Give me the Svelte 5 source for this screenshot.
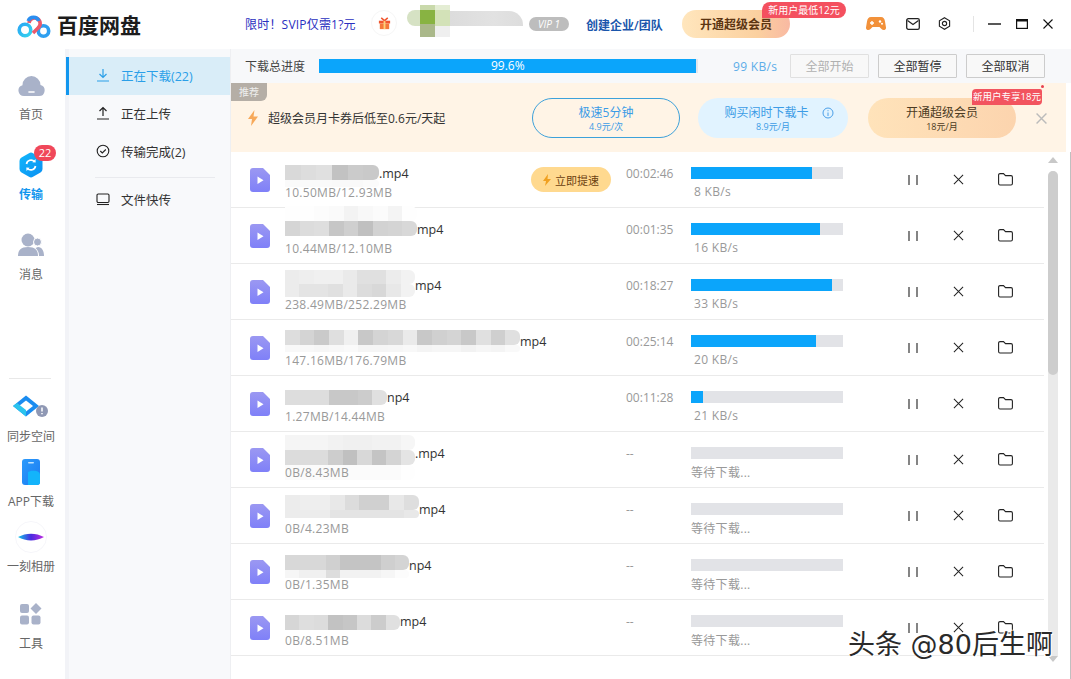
<script>
  const sideTop = [
    { icon: "home", label: "首页", h: 80 },
    { icon: "sync", label: "传输", h: 80, active: true, badge: 22 },
    { icon: "msg", label: "消息", h: 80 },
  ];

  const sideBottom = [
    { icon: "space", label: "同步空间", h: 65 },
    { icon: "app", label: "APP下载", h: 65 },
    { icon: "album", label: "一刻相册", h: 77 },
    { icon: "tools", label: "工具", h: 77 },
  ];

  const tasks = [
    { tail: ".mp4", w: 94, top: 13, size: "10.50MB/12.93MB", time: "00:02:46", pct: 79.5, speed: "8 KB/s", boost: true,
      blur: [["d9", "dd", "e0", "c2", "cb", "c9"], ["fa", "fa", "fa", "f9", "f9", "fb"]], hs: [15, 7] },
    { tail: "mp4", w: 132, top: -2, size: "10.44MB/12.10MB", time: "00:01:35", pct: 85, speed: "16 KB/s",
      blur: [["fe", "fe", "fc", "fa", "f3", "f8", "fb", "f4", "fe"], ["d5", "dc", "de", "c6", "cf", "c0", "d2", "d4", "d8"]], hs: [15, 15] },
    { tail: "mp4", w: 130, top: 6, size: "238.49MB/252.29MB", time: "00:18:27", pct: 93, speed: "33 KB/s",
      blur: [["ec", "ee", "f0", "f0", "ea", "e0", "e0", "ec", "f2"], ["ec", "e4", "e4", "e0", "ea", "dc", "d8", "e8", "f2"]], hs: [14, 13] },
    { tail: "mp4", w: 235, top: 10, size: "147.16MB/176.79MB", time: "00:25:14", pct: 82, speed: "20 KB/s",
      blur: [["dd", "d4", "ca", "df", "f0", "c8", "d4", "d8", "ea", "c8", "d0", "d4", "c8", "e0", "cf", "e0"], ["f8", "f8", "f6", "f8", "fa", "f5", "f5", "f6", "f8", "f4", "f6", "f6", "f2", "f6", "f4", "f9"]], hs: [15, 7] },
    { tail: "np4", w: 102, top: 14, size: "1.27MB/14.44MB", time: "00:11:28", pct: 8, speed: "21 KB/s",
      blur: [["dd", "dd", "dd", "c8", "c8", "cc", "e0"]], hs: [15] },
    { tail: ".mp4", w: 130, top: 3, size: "0B/8.43MB", wait: true,
      blur: [["f5", "f5", "f5", "f2", "f0", "f0", "f2", "f2", "f6"], ["dc", "dc", "dc", "cd", "c0", "d8", "c4", "d4", "e4"], ["fb", "fb", "fb", "fb", "fb", "fb", "fb", "fb", "fe"]], hs: [15, 15, 15] },
    { tail: "mp4", w: 134, top: 7, size: "0B/4.23MB", wait: true,
      blur: [["ec", "ee", "ee", "e8", "dc", "d0", "d0", "e8", "de"], ["ec", "ec", "ec", "e4", "e4", "e4", "e4", "e4", "e8"]], hs: [15, 8] },
    { tail: "np4", w: 124, top: 11, size: "0B/1.35MB", wait: true,
      blur: [["d8", "d8", "d8", "d0", "c4", "c4", "c4", "cf", "d4"], ["f6", "f0", "f0", "dd", "f2", "f2", "f2", "f6", "fc"]], hs: [15, 8] },
    { tail: "mp4", w: 115, top: 15, size: "0B/8.51MB", wait: true,
      blur: [["d6", "de", "dc", "c2", "c6", "dc", "cc", "e0"]], hs: [15] },
  ];
</script>

<div class="app">
  <header class="top">
    <div class="brand">
      <svg class="logo" viewBox="0 0 34 28" width="34" height="28">
        <defs>
          <linearGradient id="lg1" x1="0" y1="0" x2="1" y2="1">
            <stop offset="0" stop-color="#2aa7f4" />
            <stop offset="1" stop-color="#35d3ee" />
          </linearGradient>
        </defs>
        <circle cx="8" cy="19" r="5.8" fill="none" stroke="url(#lg1)" stroke-width="3.6" />
        <circle cx="26.5" cy="20" r="5.2" fill="none" stroke="#2e9ff0" stroke-width="3.6" />
        <path d="M12 12a5.6 5.6 0 1 1 9 5l-5 5" fill="none" stroke="#ec5a6c" stroke-width="3.6" />
        <path d="M11.2 10a5.6 5.6 0 0 1 10.6 0" fill="none" stroke="#2a8ef0" stroke-width="3.6" />
      </svg>
      <span class="brand-name">百度网盘</span>
    </div>
    <span class="promo">限时！SVIP仅需1?元</span>
    <span class="gift">
      <svg viewBox="0 0 16 16" width="15" height="15">
        <path d="M2 5h12v3H2z" fill="#f0562f" />
        <path d="M3 8h10v6H3z" fill="#f5793a" />
        <path d="M7 5h2v9H7z" fill="#ffd27a" />
        <path d="M8 5 4.5 2M8 5l3.5-3" stroke="#f0562f" stroke-width="1.6" />
      </svg>
    </span>
    <div class="avatar-blur">
      <div class="ab-col a"></div>
      <div class="ab-col b"></div>
      <div class="ab-col c"></div>
      <div class="ab-name"></div>
    </div>
    <span class="vip">VIP 1</span>
    <span class="team">创建企业/团队</span>
    <button class="open-vip">开通超级会员<span class="tag-top">新用户最低12元</span></button>
    <div class="tools">
      <svg viewBox="0 0 20 16" width="20" height="16">
        <path d="M5 1h10c2.400 0 3.500 1.500 4 4.500l1 6c.2 2.500-2.800 3.500-4.500 1.500L13.500 11h-7L4.500 13C2.800 15 -.2 14 0 11.500l1-6C1.500 2.500 2.600 1 5 1z" fill="#f2913a" />
        <circle cx="14" cy="5.500" r="1.200" fill="#fff" />
        <circle cx="16" cy="7.800" r="1" fill="#fff" />
        <path d="M4 7h4M6 5v4" stroke="#fff" stroke-width="1.400" />
      </svg>
      <svg viewBox="0 0 14 12" width="14" height="12">
        <rect x=".7" y=".7" width="12.600" height="10.600" rx="1.600" fill="none" stroke="#222" stroke-width="1.300" />
        <path d="m1.500 2.500 5.500 4 5.500-4" fill="none" stroke="#222" stroke-width="1.200" />
      </svg>
      <svg viewBox="0 0 14 14" width="13" height="13">
        <path d="M7 .8 12.500 4v6L7 13.200 1.500 10V4z" fill="none" stroke="#222" stroke-width="1.200" />
        <circle cx="7" cy="7" r="2.300" fill="none" stroke="#222" stroke-width="1.200" />
      </svg>
    </div>
    <div class="win">
      <svg viewBox="0 0 13 2" width="13" height="2"><path d="M0 1h13" stroke="#111" stroke-width="1.400" /></svg>
      <svg viewBox="0 0 12 10" width="12" height="10"><rect x=".6" y=".6" width="10.800" height="8.800" fill="none" stroke="#111" stroke-width="1.200" /><path d="M0 1.500h12" stroke="#111" stroke-width="2" /></svg>
      <svg viewBox="0 0 10 10" width="10" height="10"><path d="m.5.500 9 9m0-9-9 9" stroke="#111" stroke-width="1.100" /></svg>
    </div>
  </header>

  <div class="body">
    <aside class="side">
      <div class="side-group first">
        {#each sideTop as item}
          <div class="side-item" class:active={item.active} style="height:{item.h}px">
            <span class="side-icon">
              {#if item.icon === "home"}
                <svg viewBox="0 0 27 23" width="27" height="23">
                  <path d="M6 22a5.500 5.500 0 0 1-1.500-10.800A9 9 0 0 1 22.500 11 5.600 5.600 0 0 1 21 22z" fill="#a9b2c9" />
                  <path d="M11 18h5" stroke="#fff" stroke-width="1.600" stroke-linecap="round" />
                </svg>
              {:else if item.icon === "sync"}
                <svg viewBox="0 0 24 26" width="24" height="26">
                  <defs>
                    <linearGradient id="hx" x1="0" y1="0" x2="1" y2="1">
                      <stop offset="0" stop-color="#12b7fb" />
                      <stop offset="1" stop-color="#0a8ff2" />
                    </linearGradient>
                  </defs>
                  <path d="M10 1.200a4 4 0 0 1 4 0l7.500 4.300a4 4 0 0 1 2 3.500v8a4 4 0 0 1-2 3.500L14 24.800a4 4 0 0 1-4 0L2.500 20.500a4 4 0 0 1-2-3.500V9a4 4 0 0 1 2-3.500z" fill="url(#hx)" />
                  <path d="M7.500 12a4.700 4.700 0 0 1 8-2.500M16.500 14a4.700 4.700 0 0 1-8 2.500" fill="none" stroke="#fff" stroke-width="1.700" />
                  <path d="m16.500 7 .2 3.500-3.400-.3zM7.500 19l-.2-3.500 3.400.3z" fill="#fff" />
                </svg>
                <span class="badge">{item.badge}</span>
              {:else}
                <svg viewBox="0 0 26 24" width="26" height="24">
                  <circle cx="10" cy="7" r="6.500" fill="#a9b2c9" />
                  <path d="M0 23c0-6 3-9 10-9s10 3 10 9z" fill="#a9b2c9" />
                  <circle cx="19.500" cy="9" r="4" fill="#a9b2c9" stroke="#fff" />
                  <path d="M20 14c4 0 6 4 6 9h-5c0-4-1.500-6-3.500-8z" fill="#a9b2c9" />
                </svg>
              {/if}
            </span>
            <span class="side-label">{item.label}</span>
          </div>
        {/each}
      </div>
      <div class="side-group last">
        <div class="side-rule"></div>
        {#each sideBottom as item}
          <div class="side-item small" style="height:{item.h}px">
            <span class="side-icon">
              {#if item.icon === "space"}
                <svg viewBox="0 0 36 24" width="36" height="24">
                  <path d="M0 11 13 .5 26 11 13 21.500z" fill="#1a8cf0" />
                  <path d="M6 11 13 5.500 20 11 13 16.500z" fill="#fff" />
                  <path d="M0 11 4 8l9 7v6.500z" fill="#2bc4ee" />
                  <circle cx="29" cy="16" r="6" fill="#8f98b4" />
                  <path d="M29 12.500v4M29 18v1.200" stroke="#fff" stroke-width="1.500" />
                </svg>
              {:else if item.icon === "app"}
                <svg viewBox="0 0 18 26" width="18" height="26">
                  <defs>
                    <linearGradient id="ap" x1="0" y1="0" x2="1" y2="1">
                      <stop offset="0" stop-color="#2c9bfb" />
                      <stop offset="1" stop-color="#1a7bf2" />
                    </linearGradient>
                  </defs>
                  <rect width="18" height="26" rx="3" fill="url(#ap)" />
                  <path d="M6 13c4-2 12-2 12 3v7a3 3 0 0 1-3 3H6z" fill="#13b4fb" />
                  <rect x="6" y="3" width="6" height="1.600" rx=".8" fill="#bfe3ff" />
                </svg>
              {:else if item.icon === "album"}
                <svg viewBox="0 0 32 32" width="32" height="32">
                  <defs>
                    <linearGradient id="al" x1="0" y1="0" x2="1" y2="0">
                      <stop offset="0" stop-color="#12c4e8" />
                      <stop offset=".5" stop-color="#4a2be0" />
                      <stop offset="1" stop-color="#c02be0" />
                    </linearGradient>
                  </defs>
                  <circle cx="16" cy="16" r="15.500" fill="#fff" stroke="#f6f6fa" />
                  <path d="M3 16c8-4.500 18-4.500 26 0-8 4.500-18 4.500-26 0z" fill="url(#al)" />
                </svg>
              {:else}
                <svg viewBox="0 0 23 22" width="23" height="22">
                  <rect x="0" y="1" width="9" height="9" rx="2" fill="#a9b2c9" />
                  <rect x="0" y="12.500" width="9" height="9" rx="2" fill="#a9b2c9" />
                  <rect x="11.500" y="12.500" width="9" height="9" rx="2" fill="#a9b2c9" />
                  <path d="M16 0l5.500 5.500L16 11l-5.500-5.500z" fill="#a9b2c9" />
                </svg>
              {/if}
            </span>
            <span class="side-label">{item.label}</span>
          </div>
        {/each}
      </div>
    </aside>

    <nav class="sub">
      <div class="sub-item on">
        <svg viewBox="0 0 14 14" width="14" height="14"><path d="M7 1v8M3.500 6 7 9.500 10.500 6M1 13h12" fill="none" stroke="#2a9fe8" stroke-width="1.200" /></svg>
        正在下载(22)
      </div>
      <div class="sub-item">
        <svg viewBox="0 0 14 14" width="14" height="14"><path d="M7 10V2M3.500 5 7 1.500 10.500 5M1 13h12" fill="none" stroke="#222" stroke-width="1.200" /></svg>
        正在上传
      </div>
      <div class="sub-item">
        <svg viewBox="0 0 14 14" width="14" height="14"><circle cx="7" cy="7" r="5.800" fill="none" stroke="#222" stroke-width="1.100" /><path d="m4.300 7 2 2 3.500-3.500" fill="none" stroke="#222" stroke-width="1.100" /></svg>
        传输完成(2)
      </div>
      <div class="sub-rule"></div>
      <div class="sub-item">
        <svg viewBox="0 0 14 14" width="14" height="14"><rect x="1" y="2" width="12" height="8.500" rx="1.200" fill="none" stroke="#222" stroke-width="1.100" /><path d="M1 12.500h12" stroke="#222" stroke-width="1.100" /></svg>
        文件快传
      </div>
    </nav>

    <main class="main">
      <div class="total">
        <span class="total-label">下载总进度</span>
        <div class="total-bar"><div class="total-fill">99.6%</div></div>
        <span class="total-speed">99 KB/s</span>
        <button class="tbtn off">全部开始</button>
        <button class="tbtn">全部暂停</button>
        <button class="tbtn">全部取消</button>
      </div>

      <div class="banner">
        <span class="rec">推荐</span>
        <svg class="bolt" viewBox="0 0 10 16" width="10" height="16"><path d="M6.500 0 0 9h4l-1 7 7-9.500H5.500z" fill="#f7a95a" /></svg>
        <span class="banner-text">超级会员月卡券后低至0.6元/天起</span>
        <div class="pill outline"><b>极速5分钟</b><small>4.9元/次</small></div>
        <div class="pill sky">
          <b class="with-info">购买闲时下载卡 <svg viewBox="0 0 12 12" width="12" height="12"><circle cx="6" cy="6" r="5" fill="none" stroke="#4a9fe8" /><path d="M6 5.500V9M6 3.200v1" stroke="#4a9fe8" /></svg></b>
          <small>8.9元/月</small>
        </div>
        <div class="pill gold">
          <b>开通超级会员</b><small>18元/月</small>
          <span class="tag-new">新用户专享18元</span>
        </div>
        <svg class="banner-x" viewBox="0 0 10 10" width="11" height="11"><path d="m.5.500 9 9m0-9-9 9" stroke="#bbb" stroke-width="1.300" /></svg>
      </div>

      <div class="list">
        <div class="rows">
          {#each tasks as t}
            <div class="row">
              <svg class="file" viewBox="0 0 20 24" width="20" height="24">
                <defs>
                  <linearGradient id="fl" x1="0" y1="0" x2="0" y2="1">
                    <stop offset="0" stop-color="#9b98f2" />
                    <stop offset="1" stop-color="#7f80f8" />
                  </linearGradient>
                </defs>
                <path d="M3 0h10l7 7v14a3 3 0 0 1-3 3H3a3 3 0 0 1-3-3V3a3 3 0 0 1 3-3z" fill="url(#fl)" />
                <path d="m7.500 8.500 6 3.700-6 3.700z" fill="#fff" />
              </svg>
              <div class="info">
                <div class="blur" style="top:{t.top}px;width:{t.w}px">
                  {#each t.blur as line, li}
                    <div class="blur-line" style="height:{t.hs[li]}px">
                      {#each line as c}
                        <span style="background:#{c}{c}{c}"></span>
                      {/each}
                    </div>
                  {/each}
                </div>
                <div class="name" style="padding-left:{t.w}px">{t.tail}</div>
                <div class="size">{t.size}</div>
              </div>
              <div class="boost-slot">
                {#if t.boost}
                  <span class="boost">
                    <svg viewBox="0 0 8 12" width="8" height="12"><path d="M5 0 0 7h3l-1 5 6-7H4.500z" fill="#f0a020" /></svg>
                    立即提速
                  </span>
                {/if}
              </div>
              <div class="time">{t.wait ? "--" : t.time}</div>
              <div class="prog">
                <div class="bar"><div class="fill" style="width:{t.wait ? 0 : t.pct}%"></div></div>
                <div class="speed" class:wait={t.wait}>{t.wait ? "等待下载..." : t.speed}</div>
              </div>
              <div class="acts">
                <svg viewBox="0 0 10 12" width="10" height="12"><path d="M1 1v10M9 1v10" stroke="#222" stroke-width="1.100" /></svg>
                <svg viewBox="0 0 12 12" width="11" height="11"><path d="m1 1 10 10m0-10L1 11" stroke="#222" stroke-width="1.100" /></svg>
                <svg viewBox="0 0 15 13" width="15" height="13"><path d="M.6 2a1.400 1.400 0 0 1 1.400-1.400h3.500l2 2H13a1.400 1.400 0 0 1 1.400 1.400v6.600A1.400 1.400 0 0 1 13 12H2a1.400 1.400 0 0 1-1.400-1.400z" fill="none" stroke="#222" stroke-width="1.100" /></svg>
              </div>
            </div>
          {/each}
        </div>
        <div class="scroll">
          <i class="arrow up"></i>
          <div class="track"><div class="thumb"></div></div>
          <i class="arrow down"></i>
        </div>
      </div>
    </main>
  </div>

  <div class="mark">头条 @80后生啊</div>
</div>

<style>
  :global(body) {
    margin: 0;
    background: #fff;
  }

  .app {
    position: relative;
    width: 1071px;
    height: 679px;
    overflow: hidden;
    font-family: "Open Sans", "Noto Sans CJK SC", sans-serif;
    font-size: 12px;
    color: #333;
    display: flex;
    flex-direction: column;
  }

  button {
    font: inherit;
    cursor: pointer;
  }

  /* top bar */
  .top {
    height: 49px;
    flex: none;
    display: flex;
    align-items: center;
    background: #fff;
  }

  .brand {
    display: flex;
    align-items: center;
    width: 245px;
    padding-left: 17px;
    box-sizing: border-box;
    gap: 6px;
  }

  .brand-name {
    font-size: 21px;
    font-weight: 700;
    color: #1c1c1c;
    line-height: 24px;
  }

  .promo {
    width: 124px;
    color: #2a2fc0;
    font-size: 12px;
    letter-spacing: .2px;
    white-space: nowrap;
    margin-top: -2px;
  }

  .gift {
    width: 26px;
    height: 26px;
    border-radius: 50%;
    border: 1px solid #f6f6f6;
    display: flex;
    align-items: center;
    justify-content: center;
    box-sizing: border-box;
    margin-left: 2px;
    margin-top: -3px;
  }

  .avatar-blur {
    position: relative;
    width: 116px;
    height: 33px;
    margin-left: 10px;
    margin-top: -7px;
  }

  .ab-col {
    position: absolute;
    width: 15px;
  }

  .ab-col.a {
    left: 0;
    top: 5px;
    height: 16px;
    width: 13px;
    border-radius: 8px 0 0 8px;
    background: #d6e2c4;
  }

  .ab-col.b {
    left: 13px;
    top: 0;
    height: 32px;
    background: linear-gradient(#c9d9ab 0 5px, #88b342 5px 19px, #aab88a 19px);
  }

  .ab-col.c {
    left: 28px;
    top: 0;
    height: 32px;
    background: linear-gradient(#e4edd4 0 5px, #d3e2b8 5px 21px, #efefef 21px);
  }

  .ab-name {
    position: absolute;
    left: 43px;
    top: 6px;
    width: 73px;
    height: 15px;
    border-radius: 0 14px 0 0;
    background: linear-gradient(90deg, #dcdcdc, #e2e2e2 60%, #dddddd);
  }

  .vip {
    width: 40px;
    height: 14px;
    margin-left: 6px;
    margin-top: -1px;
    border-radius: 7px;
    background: #bdbdbd;
    color: #fff;
    font-size: 10px;
    font-style: italic;
    line-height: 14px;
    text-align: center;
  }

  .team {
    width: 96px;
    margin-left: 17px;
    color: #1a56ac;
    font-weight: 600;
    font-size: 12px;
    white-space: nowrap;
  }

  .open-vip {
    position: relative;
    width: 108px;
    height: 28px;
    margin-top: -1px;
    border: 0;
    border-radius: 14px;
    background: linear-gradient(90deg, #ffe6bd, #fbd09f 70%, #f9b9a2);
    color: #5c3512;
    font-weight: 600;
    font-size: 12px;
    text-align: left;
    padding: 0 0 0 18px;
  }

  .tag-top {
    position: absolute;
    left: 80px;
    top: -8px;
    width: 84px;
    height: 16px;
    border-radius: 8px 8px 8px 0;
    background: #f4505f;
    color: #fff;
    font-size: 10px;
    font-weight: 400;
    line-height: 16px;
    text-align: center;
  }

  .tools {
    display: flex;
    align-items: center;
    gap: 20px;
    margin-left: 76px;
    padding-right: 22px;
    border-right: 1px solid #e4e4e4;
    height: 16px;
    margin-top: -2px;
  }

  .tools svg:last-child {
    margin-left: -2px;
  }

  .win {
    display: flex;
    align-items: center;
    margin-left: 14px;
    gap: 15px;
    margin-top: -2px;
  }

  /* body */
  .body {
    flex: 1;
    display: flex;
    min-height: 0;
  }

  .side {
    width: 65px;
    flex: none;
    padding-right: 3px;
    box-sizing: border-box;
    background: #fff;
    display: flex;
    flex-direction: column;
    justify-content: space-between;
  }

  .side-group.first {
    padding-top: 20px;
  }

  .side-group.last {
    padding-bottom: 4px;
  }

  .side-rule {
    height: 1px;
    margin: 0 11px 12px 9px;
    background: #e8e8e8;
  }

  .side-item {
    display: flex;
    flex-direction: column;
    align-items: center;
    justify-content: flex-start;
    color: #666;
  }

  .side-icon {
    position: relative;
    height: 32px;
    display: flex;
    align-items: center;
    justify-content: center;
  }

  .side-label {
    margin-top: 5px;
    font-size: 12px;
    line-height: 18px;
    white-space: nowrap;
  }

  .side-item.active .side-label {
    color: #1296ee;
    font-weight: 700;
  }

  .badge {
    position: absolute;
    left: 15px;
    top: -4px;
    width: 22px;
    height: 16px;
    border-radius: 8px;
    background: #f0485a;
    color: #fff;
    font-size: 11px;
    line-height: 16px;
    text-align: center;
  }

  .sub {
    width: 166px;
    flex: none;
    padding-top: 8px;
    box-sizing: border-box;
    background: #f8f9fb;
    border-left: 4px solid #f2f3f7;
    border-right: 1px solid #eeeff2;
  }

  .sub-item {
    height: 38px;
    display: flex;
    align-items: center;
    gap: 11px;
    padding-left: 27px;
    padding-bottom: 2px;
    box-sizing: border-box;
    font-size: 12.5px;
    color: #333;
    white-space: nowrap;
  }

  .sub-item.on {
    margin-left: -3px;
    background: #d9edf8;
    border-left: 3px solid #1296ee;
    color: #2a9fe8;
  }

  .sub-rule {
    height: 1px;
    margin: 6px 15px 3px 26px;
    background: #e9eaee;
  }

  /* main */
  .main {
    flex: 1;
    min-width: 0;
    display: flex;
    flex-direction: column;
  }

  .total {
    height: 34px;
    flex: none;
    display: flex;
    align-items: center;
    background: #f7f8fa;
    padding-left: 14px;
    box-sizing: border-box;
  }

  .total-label {
    width: 74px;
    font-size: 12px;
    color: #444;
  }

  .total-bar {
    width: 379px;
    height: 14px;
    background: #e3e6ec;
  }

  .total-fill {
    width: 99.6%;
    height: 100%;
    background: #0ba5fb;
    color: #fff;
    font-size: 12px;
    line-height: 14px;
    text-align: center;
  }

  .total-speed {
    width: 57px;
    margin-left: 35px;
    color: #5cade8;
    font-size: 12px;
    letter-spacing: .3px;
    white-space: nowrap;
  }

  .tbtn {
    width: 79px;
    height: 24px;
    padding: 0;
    margin-right: 9px;
    background: #f8f8f8;
    border: 1px solid #ccc;
    border-radius: 1px;
    color: #333;
    font-size: 12px;
  }

  .tbtn.off {
    color: #b0b0b0;
    border-color: #e0e0e0;
  }

  .banner {
    position: relative;
    height: 69px;
    flex: none;
    width: 835px;
    display: flex;
    align-items: center;
    background: #fff4e6;
  }

  .rec {
    position: absolute;
    left: 0;
    top: 0;
    width: 36px;
    height: 18px;
    background: #b5aea6;
    color: #eee;
    font-size: 10px;
    line-height: 18px;
    text-align: center;
    border-radius: 0 0 6px 0;
  }

  .bolt {
    margin-left: 17px;
    margin-top: 1px;
  }

  .banner-text {
    width: 264px;
    margin-left: 10px;
    font-size: 12px;
    color: #333;
    white-space: nowrap;
  }

  .pill {
    position: relative;
    width: 148px;
    height: 40px;
    margin-right: 18px;
    padding-top: 2px;
    border-radius: 20px;
    box-sizing: border-box;
    display: flex;
    flex-direction: column;
    align-items: center;
    justify-content: center;
    color: #3c9ce6;
  }

  .pill b {
    font-weight: 400;
    font-size: 12px;
    line-height: 16px;
    display: flex;
    align-items: center;
    gap: 5px;
  }

  .pill b.with-info {
    gap: 13px;
    margin-left: 12px;
  }

  .pill small {
    font-size: 9px;
    line-height: 12px;
  }

  .pill.outline {
    border: 1px solid #3da1da;
  }

  .pill.sky {
    width: 150px;
    margin-right: 20px;
    background: #e1f3ff;
  }

  .pill.gold {
    background: linear-gradient(90deg, #ffe3ba, #fcd4ae);
    color: #4b3a22;
  }

  .tag-new {
    position: absolute;
    right: -26px;
    top: -9px;
    width: 70px;
    height: 16px;
    background: #f2545f;
    color: #fff;
    font-size: 9.500px;
    line-height: 16px;
    text-align: center;
    border-radius: 4px 2px 4px 0;
  }

  .tag-new::after {
    content: "";
    position: absolute;
    right: -2px;
    top: -4px;
    width: 3px;
    height: 3px;
    border-radius: 50%;
    background: #e8404f;
  }

  .banner-x {
    margin-left: 2px;
    margin-top: 1px;
  }

  /* list */
  .list {
    flex: 1;
    min-height: 0;
    display: flex;
    border-right: 1px solid #c0c0c0;
    padding-right: 12px;
  }

  .rows {
    width: 813px;
    flex: none;
  }

  .row {
    position: relative;
    height: 56px;
    box-sizing: border-box;
    border-bottom: 1px solid #eaeaea;
    display: flex;
    align-items: flex-start;
    padding-left: 19px;
  }

  .file {
    margin-top: 16px;
    flex: none;
  }

  .info {
    width: 246px;
    margin-left: 15px;
    flex: none;
  }

  .blur {
    position: absolute;
    left: 54px;
  }

  .blur-line {
    display: flex;
    border-radius: 0 6px 6px 0;
    overflow: hidden;
  }

  .blur-line span {
    flex: 1;
  }

  .name {
    margin-top: 13px;
    height: 18px;
    line-height: 18px;
    font-size: 12.5px;
    color: #333;
  }

  .size {
    position: relative;
    margin-top: 1px;
    line-height: 18px;
    font-size: 12px;
    letter-spacing: .3px;
    color: #999;
  }

  .boost-slot {
    width: 95px;
    flex: none;
    padding-top: 15px;
  }

  .boost {
    width: 80px;
    height: 25px;
    border-radius: 13px;
    background: #ffd98f;
    color: #6b3f10;
    font-size: 11px;
    display: flex;
    align-items: center;
    justify-content: center;
    gap: 4px;
  }

  .time {
    width: 65px;
    flex: none;
    margin-top: 13px;
    line-height: 18px;
    font-size: 12px;
    color: #999;
  }

  .prog {
    width: 152px;
    flex: none;
    padding-top: 15px;
  }

  .bar {
    height: 12px;
    background: #e2e3e7;
  }

  .fill {
    height: 100%;
    background: #0ba5fb;
  }

  .speed {
    margin-top: 4px;
    padding-left: 3px;
    line-height: 18px;
    font-size: 12px;
    letter-spacing: .3px;
    color: #999;
  }

  .speed.wait {
    padding-left: 0;
    margin-top: 5px;
  }

  .acts {
    flex: none;
    margin-left: 65px;
    margin-top: 21px;
    display: flex;
    align-items: center;
  }

  .acts svg:nth-child(2) {
    margin-left: 35px;
  }

  .acts svg:nth-child(3) {
    margin-left: 34px;
  }

  .scroll {
    width: 10px;
    margin-left: 4px;
    display: flex;
    flex-direction: column;
    align-items: center;
    height: 510px;
  }

  .arrow {
    width: 0;
    height: 0;
    border-left: 5px solid transparent;
    border-right: 5px solid transparent;
    flex: none;
  }

  .arrow.up {
    margin-top: 5px;
    border-bottom: 6px solid #c8c8c8;
  }

  .arrow.down {
    border-top: 6px solid #c8c8c8;
  }

  .track {
    flex: 1;
    width: 10px;
    margin: 8px 0 0;
    background: #eaeaea;
    border-radius: 5px 5px 0 0;
  }

  .thumb {
    height: 204px;
    border-radius: 5px;
    background: #cdcdcd;
  }

  .mark {
    position: absolute;
    left: 848px;
    top: 627px;
    font-family: "DejaVu Sans", "Noto Sans CJK SC", sans-serif;
    font-size: 27px;
    line-height: 36px;
    color: #2a2a2a;
    white-space: nowrap;
    text-shadow: 1px 1px 0 #fff, -1px -1px 0 #fff;
  }
</style>
